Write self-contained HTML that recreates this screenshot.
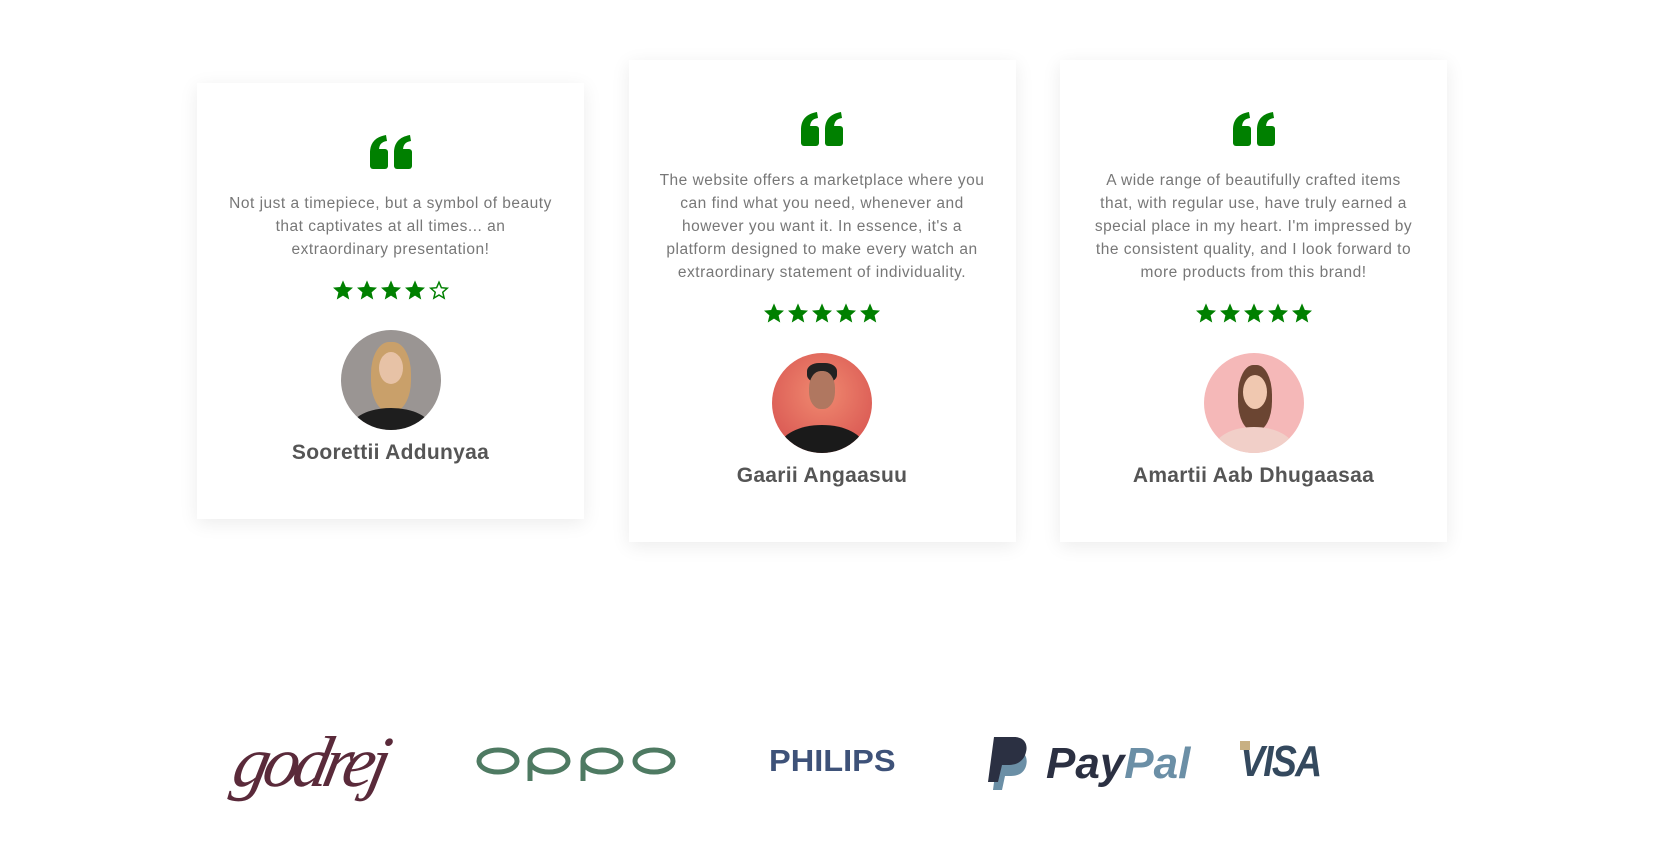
<!DOCTYPE html>
<html><head><meta charset="utf-8"><style>
*{margin:0;padding:0;box-sizing:border-box}
body{width:1679px;height:847px;background:#fff;font-family:"Liberation Sans",sans-serif;position:relative;overflow:hidden}
.row{position:absolute;left:197px;top:59px;width:1250px;height:483px;display:flex;align-items:center;justify-content:space-between}
.card{width:387px;background:#fff;box-shadow:0 4px 18px rgba(0,0,0,0.08);padding:52px 10px 54px;text-align:center}
.q{height:34px;display:flex;justify-content:center}
.txt{margin-top:23px;font-size:15.5px;line-height:23px;color:#777;letter-spacing:0.5px;white-space:nowrap}
.stars{margin-top:18px;height:22px;display:flex;justify-content:center;gap:2px}
.av{margin:29px auto 0;width:100px;height:100px;border-radius:50%;overflow:hidden;position:relative}
.name{margin-top:11px;font-size:21px;line-height:24px;font-weight:bold;color:#555;letter-spacing:0.3px}
</style></head><body>
<svg width="0" height="0" style="position:absolute"><defs>
<symbol id="q" viewBox="0 0 42 34"><g fill="#008000"><rect x="0" y="14" width="18" height="20" rx="3"/><path d="M0 18C0 8 5 2 16 0L17 6C11 7 9 10 9 16L0 20Z"/><rect x="24" y="14" width="18" height="20" rx="3"/><path d="M24 18C24 8 29 2 40 0L41 6C35 7 33 10 33 16L24 20Z"/></g></symbol>
<symbol id="s" viewBox="0 0 24 24"><path fill="#008000" d="M12 1.5l3.1 7.2 7.8.7-5.9 5.2 1.8 7.7L12 18.2l-6.8 4.1 1.8-7.7L1.1 9.4l7.8-.7z"/></symbol>
<symbol id="e" viewBox="0 0 24 24"><path fill="none" stroke="#008000" stroke-width="1.6" d="M12 3.5l2.6 6 6.4.6-4.9 4.3 1.5 6.4L12 17.4l-5.6 3.4 1.5-6.4L3 10.1l6.4-.6z"/></symbol>
</defs></svg>
<div class="row">
<div class="card">
<div class="q"><svg width="42" height="34"><use href="#q"/></svg></div>
<div class="txt">Not just a timepiece, but a symbol of beauty<br>that captivates at all times... an<br>extraordinary presentation!</div>
<div class="stars"><svg width="22" height="22"><use href="#s"/></svg><svg width="22" height="22"><use href="#s"/></svg><svg width="22" height="22"><use href="#s"/></svg><svg width="22" height="22"><use href="#s"/></svg><svg width="22" height="22"><use href="#e"/></svg></div>
<div class="av" style="background:#9a9593"><div style="position:absolute;left:30px;top:12px;width:40px;height:70px;border-radius:45%;background:#c9a06a"></div><div style="position:absolute;left:38px;top:22px;width:24px;height:32px;border-radius:50%;background:#e7c2a6"></div><div style="position:absolute;left:10px;top:78px;width:80px;height:40px;border-radius:50%;background:#1e1e1e"></div></div>
<div class="name">Soorettii Addunyaa</div>
</div>
<div class="card">
<div class="q"><svg width="42" height="34"><use href="#q"/></svg></div>
<div class="txt">The website offers a marketplace where you<br>can find what you need, whenever and<br>however you want it. In essence, it's a<br>platform designed to make every watch an<br>extraordinary statement of individuality.</div>
<div class="stars"><svg width="22" height="22"><use href="#s"/></svg><svg width="22" height="22"><use href="#s"/></svg><svg width="22" height="22"><use href="#s"/></svg><svg width="22" height="22"><use href="#s"/></svg><svg width="22" height="22"><use href="#s"/></svg></div>
<div class="av" style="background:radial-gradient(circle at 50% 40%,#f08a70,#d44c4c)"><div style="position:absolute;left:35px;top:10px;width:30px;height:20px;border-radius:40%;background:#222"></div><div style="position:absolute;left:37px;top:18px;width:26px;height:38px;border-radius:45%;background:#b07760"></div><div style="position:absolute;left:8px;top:72px;width:84px;height:44px;border-radius:50%;background:#1a1a1a"></div></div>
<div class="name">Gaarii Angaasuu</div>
</div>
<div class="card">
<div class="q"><svg width="42" height="34"><use href="#q"/></svg></div>
<div class="txt">A wide range of beautifully crafted items<br>that, with regular use, have truly earned a<br>special place in my heart. I'm impressed by<br>the consistent quality, and I look forward to<br>more products from this brand!</div>
<div class="stars"><svg width="22" height="22"><use href="#s"/></svg><svg width="22" height="22"><use href="#s"/></svg><svg width="22" height="22"><use href="#s"/></svg><svg width="22" height="22"><use href="#s"/></svg><svg width="22" height="22"><use href="#s"/></svg></div>
<div class="av" style="background:#f5b8b8"><div style="position:absolute;left:34px;top:12px;width:34px;height:66px;border-radius:45%;background:#6b4532"></div><div style="position:absolute;left:39px;top:22px;width:24px;height:34px;border-radius:50%;background:#f0c8b0"></div><div style="position:absolute;left:10px;top:74px;width:80px;height:44px;border-radius:50%;background:#f1cfc8"></div></div>
<div class="name">Amartii Aab Dhugaasaa</div>
</div>
</div>
<div style="position:absolute;left:235px;top:722px;font-family:'Liberation Serif',serif;font-style:italic;font-size:72px;line-height:80px;color:#5a2a3a;transform:skewX(-12deg);letter-spacing:-6px">godrej</div>
<svg style="position:absolute;left:476px;top:747px" width="200" height="36" viewBox="0 0 200 36">
<g fill="none" stroke="#4e7a62" stroke-width="5">
<ellipse cx="22" cy="14" rx="19" ry="11"/>
<ellipse cx="73" cy="14" rx="19" ry="11"/><line x1="54" y1="14" x2="54" y2="34"/>
<ellipse cx="126" cy="14" rx="19" ry="11"/><line x1="107" y1="14" x2="107" y2="34"/>
<ellipse cx="178" cy="14" rx="19" ry="11"/></g></svg>
<div style="position:absolute;left:769px;top:744px;font-size:31px;line-height:34px;font-weight:bold;color:#3e5279;transform:scaleX(1.05);transform-origin:left">PHILIPS</div>
<div style="position:absolute;left:988px;top:737px;width:44px;height:52px">
<svg width="44" height="54" viewBox="0 0 44 54"><path fill="#6b8fa6" d="M10 14h18c10 0 12 8 10 15-2 7-8 10-15 10h-6l-3 14H5z"/><path fill="#2b3042" d="M6 0h20c11 0 14 8 12 15-2 9-9 13-17 13h-7l-4 17H0z"/></svg></div>
<div style="position:absolute;left:1046px;top:738px;font-size:44px;line-height:52px;font-weight:bold;font-style:italic;color:#2b3042">Pay<span style="color:#6b8fa6">Pal</span></div>
<div style="position:absolute;left:1240px;top:736px;font-size:44px;line-height:52px;font-weight:bold;font-style:italic;color:#34495e;letter-spacing:-2px;transform:scaleX(0.85);transform-origin:left">VISA</div>
<div style="position:absolute;left:1240px;top:741px;width:10px;height:9px;background:#c8b083"></div>
</body></html>
